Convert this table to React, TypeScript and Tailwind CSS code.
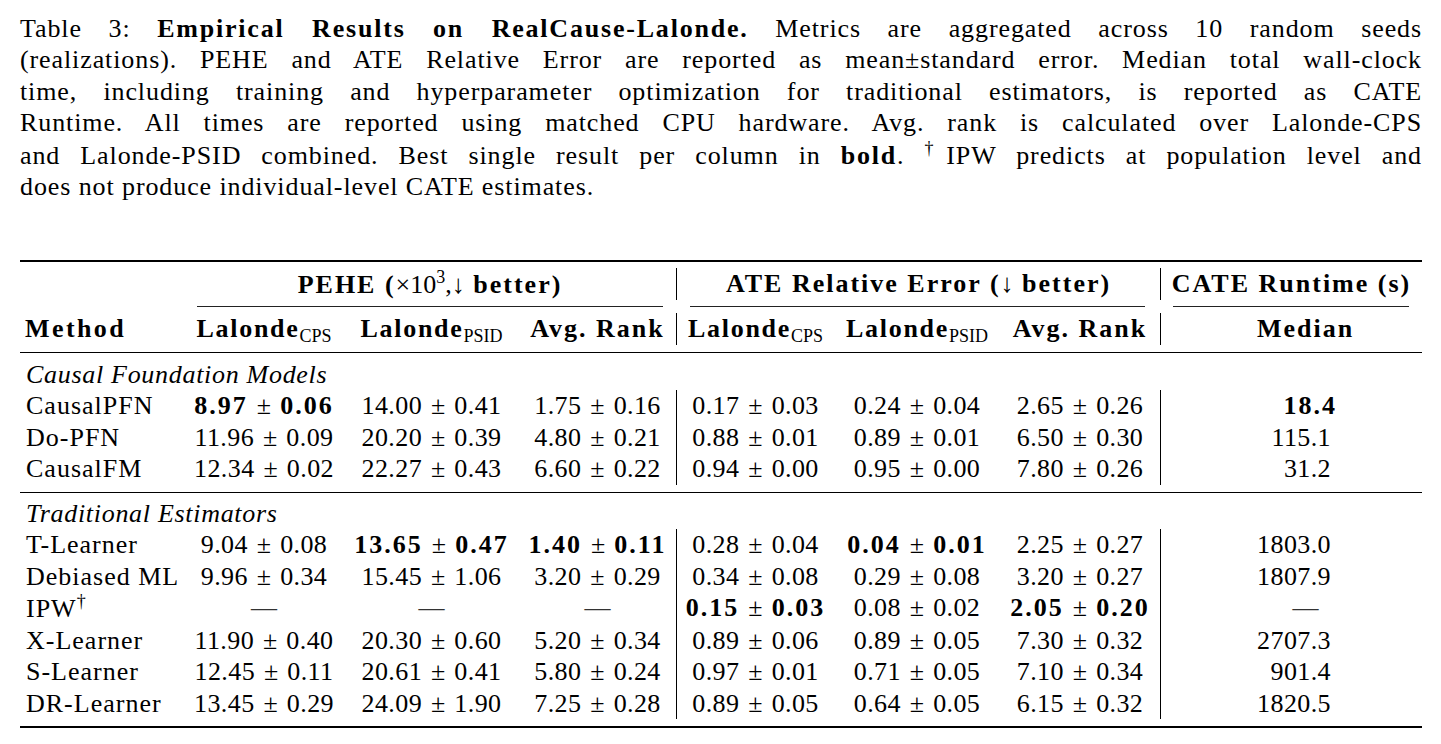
import type { ReactNode } from "react";

type Val = [string, string, boolean?] | null;

type Row = {
	name: ReactNode;
	vals: Val[];
	rt: string | null;
	rtBold?: boolean;
};

const foundation: Row[] = [
	{
		name: "CausalPFN",
		vals: [["8.97", "0.06", true], ["14.00", "0.41"], ["1.75", "0.16"], ["0.17", "0.03"], ["0.24", "0.04"], ["2.65", "0.26"]],
		rt: "18.4",
		rtBold: true,
	},
	{
		name: "Do-PFN",
		vals: [["11.96", "0.09"], ["20.20", "0.39"], ["4.80", "0.21"], ["0.88", "0.01"], ["0.89", "0.01"], ["6.50", "0.30"]],
		rt: "115.1",
	},
	{
		name: "CausalFM",
		vals: [["12.34", "0.02"], ["22.27", "0.43"], ["6.60", "0.22"], ["0.94", "0.00"], ["0.95", "0.00"], ["7.80", "0.26"]],
		rt: "31.2",
	},
];

const traditional: Row[] = [
	{
		name: "T-Learner",
		vals: [["9.04", "0.08"], ["13.65", "0.47", true], ["1.40", "0.11", true], ["0.28", "0.04"], ["0.04", "0.01", true], ["2.25", "0.27"]],
		rt: "1803.0",
	},
	{
		name: "Debiased ML",
		vals: [["9.96", "0.34"], ["15.45", "1.06"], ["3.20", "0.29"], ["0.34", "0.08"], ["0.29", "0.08"], ["3.20", "0.27"]],
		rt: "1807.9",
	},
	{
		name: (
			<>
				IPW<span className="text-[18px] leading-none align-[10px]">†</span>
			</>
		),
		vals: [null, null, null, ["0.15", "0.03", true], ["0.08", "0.02"], ["2.05", "0.20", true]],
		rt: null,
	},
	{
		name: "X-Learner",
		vals: [["11.90", "0.40"], ["20.30", "0.60"], ["5.20", "0.34"], ["0.89", "0.06"], ["0.89", "0.05"], ["7.30", "0.32"]],
		rt: "2707.3",
	},
	{
		name: "S-Learner",
		vals: [["12.45", "0.11"], ["20.61", "0.41"], ["5.80", "0.24"], ["0.97", "0.01"], ["0.71", "0.05"], ["7.10", "0.34"]],
		rt: "901.4",
	},
	{
		name: "DR-Learner",
		vals: [["13.45", "0.29"], ["24.09", "1.90"], ["7.25", "0.28"], ["0.89", "0.05"], ["0.64", "0.05"], ["6.15", "0.32"]],
		rt: "1820.5",
	},
];

function PM({ v }: { v: Val }) {
	if (!v) return <span className="text-[#333]">—</span>;
	const [a, b, bold] = v;
	return (
		<span className={bold ? "font-bold tracking-[2px]" : "tracking-[0.4px]"}>
			{a}
			<span className="mx-[9px] tracking-normal font-normal">±</span>
			{b}
		</span>
	);
}

function Sub({ children }: { children: ReactNode }) {
	return <span className="text-[18px] font-normal tracking-normal leading-none align-[-5px]">{children}</span>;
}

function DataRow({ row }: { row: Row }) {
	return (
		<>
			<div className="pl-[6px] tracking-[1px] whitespace-nowrap">{row.name}</div>
			{row.vals.map((v, i) => (
				<div
					key={i}
					className={`text-center whitespace-nowrap ${i === 3 ? "border-l border-black" : ""}`}
				>
					<PM v={v} />
				</div>
			))}
			{row.rt === null ? (
				<div className="border-l border-black pl-[28px] text-center text-[#333]">—</div>
			) : (
				<div
					className={`border-l border-black text-right ${row.rtBold ? "pr-[85px] font-bold tracking-[2px]" : "pr-[91px] tracking-[0.4px]"}`}
				>
					{row.rt}
				</div>
			)}
		</>
	);
}

const line = "text-justify [text-align-last:justify]";

export default function App() {
	return (
		<div className="min-h-screen bg-white text-black [font-family:Liberation_Serif,serif] text-[26px]">
			<div className="ml-[20px] w-[1402px] pt-[13px]">
				{/* caption */}
				<div className="leading-[31.4px] tracking-[0.9px]">
					<div className={line}>
						Table 3: <span className="font-bold tracking-[1.8px]">Empirical Results on RealCause-Lalonde.</span>{" "}
						Metrics are aggregated across 10 random seeds
					</div>
					<div className={line}>
						(realizations). PEHE and ATE Relative Error are reported as mean±standard error. Median total wall-clock
					</div>
					<div className={line}>
						time, including training and hyperparameter optimization for traditional estimators, is reported as CATE
					</div>
					<div className={line}>
						Runtime. All times are reported using matched CPU hardware. Avg. rank is calculated over Lalonde-CPS
					</div>
					<div className={line}>
						and Lalonde-PSID combined. Best single result per column in{" "}
						<span className="font-bold tracking-[1.8px]">bold</span>.{" "}
						<span className="text-[18px] tracking-normal leading-none align-[10px]">†</span>IPW predicts at population
						level and
					</div>
					<div>does not produce individual-level CATE estimates.</div>
				</div>

				{/* table */}
				<div className="mt-[57.5px] grid grid-cols-[164px_160px_175px_157px_158px_166px_160px_262px] leading-[31.5px]">
					<div className="col-span-8 h-[2px] bg-black mb-[6px]" />

					{/* header row 1 */}
					<div />
					<div className="col-span-3 text-center font-bold tracking-[2px] whitespace-nowrap">
						PEHE (<span className="font-normal tracking-normal">×10</span>
						<span className="text-[18px] font-normal tracking-normal leading-none align-[10px]">3</span>
						<span className="font-normal tracking-normal">,↓</span> better)
					</div>
					<div className="col-span-3 border-l border-black text-center font-bold tracking-[2px] whitespace-nowrap">
						ATE Relative Error (<span className="font-normal tracking-normal">↓</span> better)
					</div>
					<div className="border-l border-black text-center font-bold tracking-[2px] whitespace-nowrap">
						CATE Runtime (s)
					</div>

					{/* cmidrules */}
					<div />
					<div className="col-span-3 px-[13px] pt-[5.5px] pb-[6.5px]">
						<div className="h-px bg-[#222]" />
					</div>
					<div className="col-span-3 pl-[14px] pr-[15px] pt-[5.5px] pb-[6.5px]">
						<div className="h-px bg-[#222]" />
					</div>
					<div className="pl-[13px] pr-[13px] pt-[5.5px] pb-[6.5px]">
						<div className="h-px bg-[#222]" />
					</div>

					{/* header row 2 */}
					<div className="pl-[5px] font-bold tracking-[2.4px]">Method</div>
					<div className="text-center font-bold tracking-[1.7px] whitespace-nowrap">
						Lalonde<Sub>CPS</Sub>
					</div>
					<div className="text-center font-bold tracking-[1.7px] whitespace-nowrap">
						Lalonde<Sub>PSID</Sub>
					</div>
					<div className="text-center font-bold tracking-[2px] whitespace-nowrap">Avg. Rank</div>
					<div className="border-l border-black text-center font-bold tracking-[1.7px] whitespace-nowrap">
						Lalonde<Sub>CPS</Sub>
					</div>
					<div className="text-center font-bold tracking-[1.7px] whitespace-nowrap">
						Lalonde<Sub>PSID</Sub>
					</div>
					<div className="text-center font-bold tracking-[2px] whitespace-nowrap">Avg. Rank</div>
					<div className="border-l border-black pl-[28px] text-center font-bold tracking-[2px]">Median</div>

					<div className="col-span-8 h-px bg-black mt-[7px] mb-[5.5px]" />

					<div className="col-span-8 pl-[6px] italic tracking-[0.7px]">Causal Foundation Models</div>
					{foundation.map((r, i) => (
						<DataRow key={i} row={r} />
					))}

					<div className="col-span-8 h-px bg-black mt-[7px] mb-[5px]" />

					<div className="col-span-8 pl-[6px] italic tracking-[0.7px]">Traditional Estimators</div>
					{traditional.map((r, i) => (
						<DataRow key={i} row={r} />
					))}

					<div className="col-span-8 h-[2px] bg-black mt-[6.5px]" />
				</div>
			</div>
		</div>
	);
}
